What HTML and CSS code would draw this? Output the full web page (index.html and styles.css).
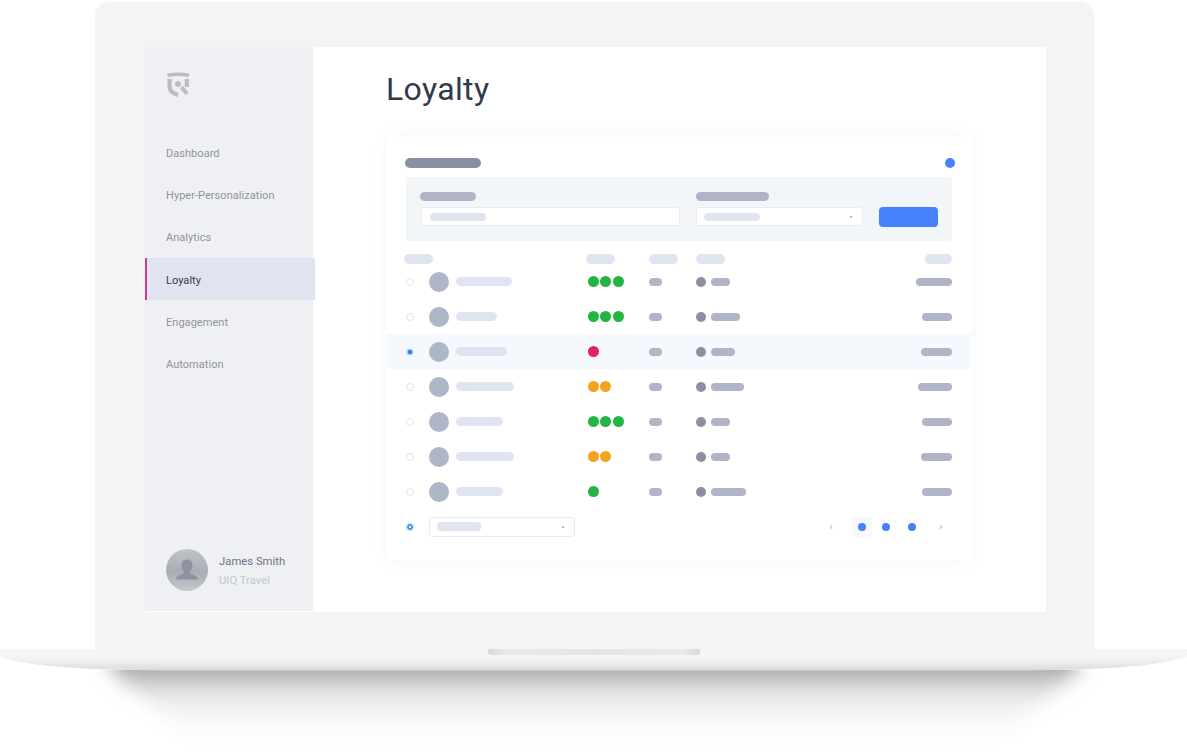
FILE: index.html
```html
<!DOCTYPE html>
<html lang="en">
<head>
<meta charset="utf-8">
<title>Loyalty</title>
<link rel="stylesheet" href="styles.css">
</head>
<body>
<div class="stage">
  <svg class="ground-shadow" width="1187" height="82" viewBox="0 0 1187 82" aria-hidden="true">
    <defs>
      <linearGradient id="sg" gradientUnits="userSpaceOnUse" x1="0" y1="0" x2="0" y2="80">
        <stop offset="0" stop-color="#a4a4a4"/>
        <stop offset="0.14" stop-color="#cfcfcf"/>
        <stop offset="0.34" stop-color="#ececec"/>
        <stop offset="0.65" stop-color="#f9f9f9"/>
        <stop offset="1" stop-color="#ffffff"/>
      </linearGradient>
      <filter id="sb" x="-10%" y="-30%" width="120%" height="160%"><feGaussianBlur stdDeviation="10"/></filter>
    </defs>
    <polygon points="105,-40 1082,-40 1078,0 1000,70 190,70 112,0" fill="url(#sg)" filter="url(#sb)"/>
  </svg>
  <div class="lid">
    <div class="screen">
      <aside class="sidebar">
        <svg class="logo" width="24" height="26" viewBox="0 0 24 26" fill="none" stroke="#bcbdbf" aria-hidden="true">
          <path d="M1.500 3.200Q12 1.200 23 3.200" stroke-width="3.500"/>
          <path d="M3.600 7V14.500Q3.600 20.500 12 23" stroke-width="4.200"/>
          <path d="M20.800 7V15" stroke-width="4.200"/>
          <circle cx="12" cy="12" r="3" fill="#bcbdbf" stroke="none"/>
          <path d="M15.500 15L21 21.800" stroke-width="4"/>
        </svg>
        <nav class="nav">
          <a class="nav-item">Dashboard</a>
          <a class="nav-item">Hyper-Personalization</a>
          <a class="nav-item">Analytics</a>
          <a class="nav-item active">Loyalty</a>
          <a class="nav-item">Engagement</a>
          <a class="nav-item">Automation</a>
        </nav>
        <div class="user">
          <div class="avatar-lg">
            <svg width="42" height="42" viewBox="0 0 42 42" aria-hidden="true">
              <path d="M21 10.500c3.400 0 5.500 2.600 5.500 6 0 2.600-1 4.600-2.600 5.800v1.700c0 1 4 1.800 6.200 3 1.200.7 1.700 1.800 1.800 3.500H10.100c.1-1.700.6-2.800 1.800-3.500 2.200-1.200 6.200-2 6.200-3v-1.700c-1.600-1.200-2.600-3.200-2.600-5.800 0-3.400 2.100-6 5.500-6z" fill="#8d929e"/>
            </svg>
          </div>
          <div class="user-text">
            <div class="user-name">James Smith</div>
            <div class="user-org">UIQ Travel</div>
          </div>
        </div>
      </aside>
      <main class="main">
        <h1 class="title">Loyalty</h1>
        <section class="card">
          <div class="card-head">
            <span class="bar bar-title"></span>
            <span class="dot-blue"></span>
          </div>
          <div class="filters">
            <div class="field field-a">
              <span class="bar bar-label w56"></span>
              <div class="input"><span class="bar bar-ph w56"></span></div>
            </div>
            <div class="field field-b">
              <span class="bar bar-label w73"></span>
              <div class="input input-b"><span class="bar bar-ph w56"></span><i class="caret"></i></div>
            </div>
            <span class="button"></span>
          </div>
          <div class="thead">
            <span class="bar bar-th"></span>
            <span class="bar bar-th"></span>
            <span class="bar bar-th"></span>
            <span class="bar bar-th"></span>
            <span class="bar bar-th th-end"></span>
          </div>
          <div class="row">
            <i class="radio"></i>
            <div class="who"><i class="avatar"></i><span class="bar bar-name" style="width:56px"></span></div>
            <div class="dots"><i class="d green"></i><i class="d green"></i><i class="d green"></i></div>
            <span class="bar bar-sm"></span>
            <div class="type"><i class="gray"></i><span class="bar bar-val" style="width:19px"></span></div>
            <span class="bar bar-val end" style="width:36px"></span>
          </div>
          <div class="row">
            <i class="radio"></i>
            <div class="who"><i class="avatar"></i><span class="bar bar-name" style="width:41px"></span></div>
            <div class="dots"><i class="d green"></i><i class="d green"></i><i class="d green"></i></div>
            <span class="bar bar-sm"></span>
            <div class="type"><i class="gray"></i><span class="bar bar-val" style="width:29px"></span></div>
            <span class="bar bar-val end" style="width:30px"></span>
          </div>
          <div class="row selected">
            <i class="radio on"></i>
            <div class="who"><i class="avatar"></i><span class="bar bar-name" style="width:51px"></span></div>
            <div class="dots"><i class="d pink"></i></div>
            <span class="bar bar-sm"></span>
            <div class="type"><i class="gray"></i><span class="bar bar-val" style="width:24px"></span></div>
            <span class="bar bar-val end" style="width:31px"></span>
          </div>
          <div class="row">
            <i class="radio"></i>
            <div class="who"><i class="avatar"></i><span class="bar bar-name" style="width:58px"></span></div>
            <div class="dots"><i class="d amber"></i><i class="d amber"></i></div>
            <span class="bar bar-sm"></span>
            <div class="type"><i class="gray"></i><span class="bar bar-val" style="width:33px"></span></div>
            <span class="bar bar-val end" style="width:34px"></span>
          </div>
          <div class="row">
            <i class="radio"></i>
            <div class="who"><i class="avatar"></i><span class="bar bar-name" style="width:47px"></span></div>
            <div class="dots"><i class="d green"></i><i class="d green"></i><i class="d green"></i></div>
            <span class="bar bar-sm"></span>
            <div class="type"><i class="gray"></i><span class="bar bar-val" style="width:19px"></span></div>
            <span class="bar bar-val end" style="width:30px"></span>
          </div>
          <div class="row">
            <i class="radio"></i>
            <div class="who"><i class="avatar"></i><span class="bar bar-name" style="width:58px"></span></div>
            <div class="dots"><i class="d amber"></i><i class="d amber"></i></div>
            <span class="bar bar-sm"></span>
            <div class="type"><i class="gray"></i><span class="bar bar-val" style="width:19px"></span></div>
            <span class="bar bar-val end" style="width:31px"></span>
          </div>
          <div class="row">
            <i class="radio"></i>
            <div class="who"><i class="avatar"></i><span class="bar bar-name" style="width:47px"></span></div>
            <div class="dots"><i class="d green"></i></div>
            <span class="bar bar-sm"></span>
            <div class="type"><i class="gray"></i><span class="bar bar-val" style="width:35px"></span></div>
            <span class="bar bar-val end" style="width:30px"></span>
          </div>
          <div class="foot">
            <i class="radio ring"></i>
            <div class="input input-foot"><span class="bar bar-ph w44"></span><i class="caret"></i></div>
            <div class="pager">
              <span class="chev">‹</span>
              <span class="page current"><i class="pd"></i></span>
              <span class="page"><i class="pd"></i></span>
              <span class="page"><i class="pd"></i></span>
              <span class="chev">›</span>
            </div>
          </div>
        </section>
      </main>
    </div>
  </div>
  <div class="base">
    <svg class="base-shape" width="1187" height="23" viewBox="0 0 1187 23" aria-hidden="true">
      <defs>
        <linearGradient id="bg" x1="0" y1="0" x2="0" y2="1">
          <stop offset="0" stop-color="#f5f5f5"/>
          <stop offset="0.28" stop-color="#f6f6f6"/>
          <stop offset="0.6" stop-color="#eeeeee"/>
          <stop offset="1" stop-color="#dadada"/>
        </linearGradient>
      </defs>
      <path d="M0 0H1187V8C1160 16 1115 21 1020 21.500H170C70 21 25 16 0 8Z" fill="url(#bg)"/>
    </svg>
    <div class="notch"></div>
  </div>
</div>
</body>
</html>
```
FILE: styles.css
```css
* { box-sizing: border-box; }
html, body { margin: 0; padding: 0; background: #fff; }
body { font-family: Roboto, "Noto Sans", sans-serif; }
.stage { position: relative; width: 1187px; height: 752px; overflow: hidden; padding-top: 2px; }

.ground-shadow { position: absolute; left: 0; top: 670px; }

.lid {
  position: relative;
  width: 999px; height: 647px; margin-left: 95px;
  padding: 45px 48px 0 50px;
  background: #f4f4f4;
  border-radius: 14px 14px 0 0;
  box-shadow: 0 0 14px rgba(0,0,0,.012);
}
.screen { display: flex; height: 565px; background: #fff; }

.sidebar {
  width: 168px; height: 564px; flex: none;
  background: #eff0f4;
  display: flex; flex-direction: column;
  padding-top: 25px;
}
.logo { display: block; margin-left: 21px; flex: none; }
.nav { display: flex; flex-direction: column; margin-top: 34px; width: 170px; position: relative; z-index: 1; }
.nav-item {
  display: flex; align-items: center;
  height: 42px; padding-left: 21px;
  font-size: 11px; letter-spacing: .04px; color: #8f93a1;
}
.nav-item.active {
  background: #dfe4f0; color: #33384a;
  padding: 2px 0 0 19px; border-left: 2px solid #d6388a;
}
.nav-item.active + .nav-item { margin-top: 1px; }
.user { margin-top: auto; margin-bottom: 20px; padding-left: 21px; display: flex; align-items: center; gap: 11px; }
.avatar-lg {
  width: 42px; height: 42px; border-radius: 50%; flex: none; overflow: hidden;
  background: linear-gradient(#c0c3c9, #a9acb4 55%, #c6c8ce);
}
.avatar-lg svg { display: block; }
.user-text { display: flex; flex-direction: column; gap: 5px; font-size: 11.300px; line-height: 14px; padding-top: 2px; }
.user-name { color: #6e7281; }
.user-org { color: #c3c6d4; }

.main { flex: 1; padding: 0 0 0 73px; min-width: 0; }
.title {
  margin: 22px 0 0; padding: 0;
  font-size: 32px; font-weight: 400; line-height: 40px;
  letter-spacing: .35px; color: #33384a;
}
.card {
  width: 586px; height: 423px; margin-top: 28px;
  background: #fff; border-radius: 4px;
  box-shadow: 0 0 16px rgba(90,130,220,.07);
  padding: 21px 1px 0 1px;
}
.bar { display: block; border-radius: 5px; flex: none; }
.card-head { display: flex; justify-content: space-between; padding: 0 16px 0 18px; height: 10px; }
.bar-title { width: 76px; height: 10px; background: #8a90a3; }
.dot-blue { width: 10px; height: 10px; border-radius: 50%; background: #4481fb; }

.filters {
  display: flex; align-items: flex-start;
  width: 546px; height: 64px; margin: 9px 0 0 19px;
  background: #f3f6f9; border-radius: 2px;
  padding-top: 15px;
}
.field { display: flex; flex-direction: column; gap: 6px; }
.field-a { margin-left: 14px; width: 276px; }
.field-b { width: 167px; }
.bar-label { height: 9px; background: #afb4c6; }
.w56 { width: 56px; }
.w73 { width: 73px; }
.w44 { width: 44px; }
.input {
  display: flex; align-items: center; justify-content: space-between;
  height: 19px; background: #fff;
  border: 1px solid #e8ebf1; border-radius: 3px;
  margin-left: 1px; width: 259px; padding: 0 10px 0 8px;
}
.input-b { width: 167px; margin-left: 0; padding-left: 7px; }
.bar-ph { height: 8px; background: #dfe4f0; border-radius: 4px; }
.caret { width: 2px; height: 2px; background: #a0a4ae; border-radius: 50%; }
.button {
  width: 59px; height: 20px; margin: 15px 0 0 16px;
  background: #4481fb; border-radius: 4px;
}

.thead {
  display: grid; grid-template-columns: 182px 63px 47px 1fr auto;
  margin-top: 13px; padding: 0 19px 0 17px; height: 10px;
}
.bar-th { width: 29px; height: 10px; background: #dfe4f0; }
.th-end { width: 27px; }

.row {
  display: grid; grid-template-columns: 23px 158px 62px 47px 1fr auto;
  align-items: center;
  height: 35px; padding: 0 19px 0 19px;
}
.row.selected { background: #f5f9fd; }
.radio {
  display: block; width: 8px; height: 8px; border-radius: 50%;
  background: #fff; border: 1px solid #e2e4e9;
}
.radio.on { border: 0; background: radial-gradient(circle, #2f8cf3 0 2px, #d9ecfd 3px 4px); }
.radio.ring { border: 0; background: radial-gradient(circle, #e9f4fe 0 .8px, #3b93f0 1.500px 2.400px, #c4e1fb 3.100px 4px); }
.who { display: flex; align-items: center; gap: 7px; }
.avatar { display: block; width: 20px; height: 20px; border-radius: 50%; background: #afb6c8; }
.bar-name { height: 9px; background: #dfe4f0; }
.dots { display: flex; gap: 1.500px; margin-left: .5px; }
.d { display: block; width: 11px; height: 11px; border-radius: 50%; }
.green { background: #22b542; }
.amber { background: #f5a31f; }
.pink { background: #e2206c; }
.bar-sm { width: 13px; height: 8px; background: #afb4c6; }
.type { display: flex; align-items: center; gap: 5px; }
.gray { display: block; width: 10px; height: 10px; border-radius: 50%; background: #8a90a2; }
.bar-val { height: 8px; background: #afb4c6; border-radius: 4px; }
.end { justify-self: end; }

.foot { display: flex; align-items: center; height: 35px; padding: 0 25px 0 19px; }
.input-foot { width: 146px; height: 20px; margin-left: 15px; padding: 0 10px 0 7px; }
.input-foot .bar-ph { height: 9px; }
.pager { display: flex; align-items: center; margin-left: auto; }
.chev { width: 10px; text-align: center; font-size: 11px; line-height: 12px; color: #9bb5c9; }
.pager .chev:first-child { margin-right: 16px; }
.pager .chev:last-child { margin-left: 14px; }
.page { display: flex; align-items: center; justify-content: center; width: 20px; height: 20px; border-radius: 3px; margin-right: 5px; }
.page.current { background: #f5f9fd; margin-right: 4px; }
.page:nth-child(3) { margin-right: 6px; }
.page:nth-child(4) { margin-right: 0; }
.pd { display: block; width: 8px; height: 8px; border-radius: 50%; background: #4481fb; }

.base { position: relative; height: 23px; }
.base-shape { display: block; }
.notch {
  position: absolute; left: 488px; top: 0; width: 212px; height: 6px;
  background: linear-gradient(90deg, #d8d8d8, #e9e9e9 8%, #e4e4e4 50%, #e9e9e9 92%, #d8d8d8);
  border-radius: 0 0 3px 3px;
}
```
